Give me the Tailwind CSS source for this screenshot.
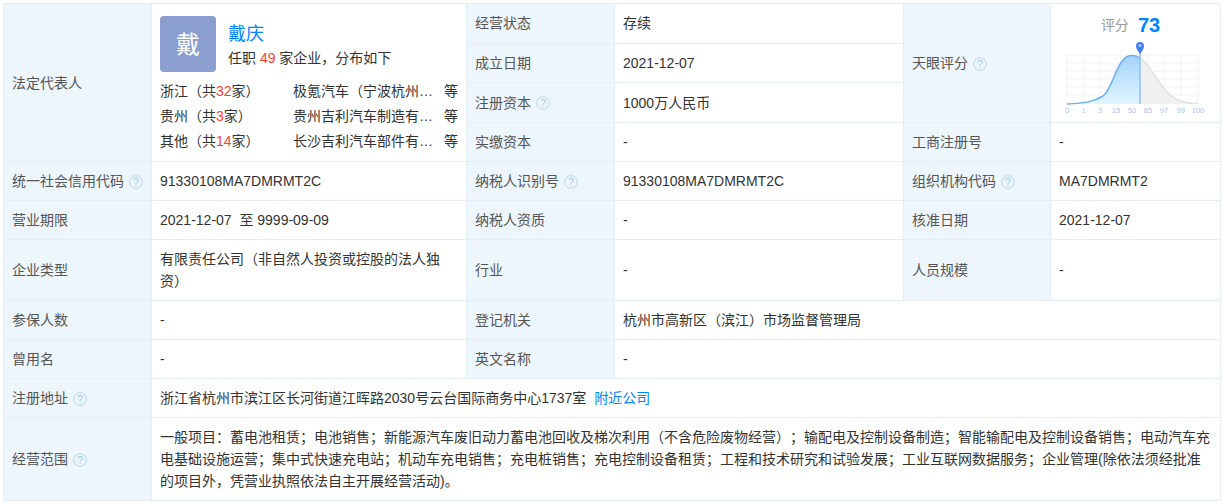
<!DOCTYPE html>
<html lang="zh">
<head>
    <meta charset="UTF-8">
    <title>工商信息</title>
    <script src="https://cdn.jsdelivr.net/npm/@tailwindcss/browser@4"></script>
</head>
<body class="bg-white font-['Liberation_Sans','Noto_Sans_CJK_SC',sans-serif] text-[14px] leading-[19px] text-[#333] [text-spacing-trim:space-all]">
<div class="pl-[3px] pr-[2px] pt-[3px]">
    <table class="w-[1218px] table-fixed border-collapse border border-[#e4eef6]">
        <colgroup>
            <col class="w-[148px]"><col class="w-[315px]"><col class="w-[148px]"><col class="w-[289px]"><col class="w-[147px]"><col>
        </colgroup>
        <tbody>
            <tr class="h-[39.5px]">
                <td rowspan="4" class="border border-[#e4eef6] bg-[#eef6fd] px-2 pt-[2px] text-[#555]">法定代表人</td>
                <td rowspan="4" class="border border-[#e4eef6] px-2 py-0 align-top">
                    <div class="flex items-start pt-[12px]">
                        <div class="flex h-14 w-14 items-center justify-center rounded-[4px] bg-[#8a9fcf] text-[24px] text-white">戴</div>
                        <div class="ml-3">
                            <div class="mt-[6px] text-[18px] leading-[24px] text-[#0084ff]">戴庆</div>
                            <div class="mt-[2px] leading-[20px]">任职 <span class="text-[#ff3b30]">49</span> 家企业，分布如下</div>
                        </div>
                    </div>
                    <div class="mt-[7px] flex h-[25px] items-center"><span class="w-[133px] shrink-0">浙江（共<span class="text-[#ff3b30]">32</span>家）</span><span class="w-[141px]">极氪汽车（宁波杭州…</span><span class="ml-auto">等</span></div>
                    <div class="flex h-[25px] items-center"><span class="w-[133px] shrink-0">贵州（共<span class="text-[#ff3b30]">3</span>家）</span><span class="w-[141px]">贵州吉利汽车制造有…</span><span class="ml-auto">等</span></div>
                    <div class="flex h-[25px] items-center"><span class="w-[133px] shrink-0">其他（共<span class="text-[#ff3b30]">14</span>家）</span><span class="w-[141px]">长沙吉利汽车部件有…</span><span class="ml-auto">等</span></div>
                </td>
                <td class="border border-[#e4eef6] bg-[#eef6fd] px-2 text-[#555]">经营状态</td>
                <td class="border border-[#e4eef6] px-2">存续</td>
                <td rowspan="3" class="border border-[#e4eef6] bg-[#eef6fd] px-2 pt-[2px] text-[#555]">
                    <span class="inline-flex items-center gap-[5px]">天眼评分
                        <svg class="h-[14px] w-[14px]" viewBox="0 0 14 14"><circle cx="7" cy="7" r="6.3" fill="none" stroke="#b5d8f5"/><text x="7" y="10.5" text-anchor="middle" font-size="10" fill="#9ccbf0">?</text></svg>
                    </span>
                </td>
                <td rowspan="3" class="border border-[#e4eef6] p-0 align-top">
                    <div class="mt-[9px] flex items-center justify-center gap-[9px] pr-[10px]">
                        <span class="text-[#999]">评分</span><span class="text-[20px] leading-[24px] font-bold text-[#0084ff]">73</span>
                    </div>
                    <svg class="mt-[3px] ml-[14px] block" width="146" height="80" viewBox="0 0 146 80">
                        <defs>
                            <linearGradient id="blue" x1="0" y1="0" x2="0" y2="1"><stop offset="0" stop-color="#a4d2fb"/><stop offset="1" stop-color="#dff6ff"/></linearGradient>
                        </defs>
                        <g stroke="#f4f4f4" stroke-width="1">
                            <path d="M2 15H133M2 23H133M2 31H133M2 39H133M2 47H133M2 55H133"/>
                            <path d="M2 15V64M18.500 15V64M35 15V64M51 15V64M67 15V64M83 15V64M99 15V64M116 15V64M133 15V64"/>
                        </g>
                        <path d="M75 18 C85 23 93 45 105 55 C114 62 122 63 133 63.500 L133 64 H75Z" fill="#f0f0f0"/>
                        <path d="M75 18 C85 23 93 45 105 55 C114 62 122 63 133 63.500" fill="none" stroke="#e2e2e2" stroke-width="1.500"/>
                        <path d="M2 64 C20 63 28 62 38 56 C48 49 52 16 66 15.500 C70 15 73 16.500 75 18 V64 H2Z" fill="url(#blue)"/>
                        <path d="M2 64 C20 63 28 62 38 56 C48 49 52 16 66 15.500 C70 15 73 16.500 75 18" fill="none" stroke="#68aefc" stroke-width="1.500"/>
                        <path d="M75 12V64" stroke="#8dbcfb" stroke-width="1.500"/>
                        <path d="M75 14 C72 10 71 8 71 6 A4 4 0 0 1 79 6 C79 8 78 10 75 14Z" fill="#3f7ff5"/>
                        <circle cx="75" cy="5.500" r="1.500" fill="#a9c8fb"/>
                        <g font-size="7.500" fill="#a9c4ee" text-anchor="middle">
                            <text x="2" y="73">0</text><text x="18.500" y="73">1</text><text x="35" y="73">3</text><text x="51" y="73">15</text><text x="67" y="73">50</text><text x="83" y="73">85</text><text x="99" y="73">97</text><text x="116" y="73">99</text><text x="133" y="73">100</text>
                        </g>
                    </svg>
                </td>
            </tr>
            <tr class="h-[39px]">
                <td class="border border-[#e4eef6] bg-[#eef6fd] px-2 pt-[2px] text-[#555]">成立日期</td>
                <td class="border border-[#e4eef6] px-2 pt-[2px]">2021-12-07</td>
            </tr>
            <tr class="h-[40px]">
                <td class="border border-[#e4eef6] bg-[#eef6fd] px-2 pt-[2px] text-[#555]">
                    <span class="inline-flex items-center gap-[5px]">注册资本
                        <svg class="h-[14px] w-[14px]" viewBox="0 0 14 14"><circle cx="7" cy="7" r="6.3" fill="none" stroke="#b5d8f5"/><text x="7" y="10.5" text-anchor="middle" font-size="10" fill="#9ccbf0">?</text></svg>
                    </span>
                </td>
                <td class="border border-[#e4eef6] px-2 pt-[2px]">1000万人民币</td>
            </tr>
            <tr class="h-[39px]">
                <td class="border border-[#e4eef6] bg-[#eef6fd] px-2 pt-[2px] text-[#555]">实缴资本</td>
                <td class="border border-[#e4eef6] px-2 pt-[2px]">-</td>
                <td class="border border-[#e4eef6] bg-[#eef6fd] px-2 pt-[2px] text-[#555]">工商注册号</td>
                <td class="border border-[#e4eef6] px-2 pt-[2px]">-</td>
            </tr>
            <tr class="h-[39px]">
                <td class="border border-[#e4eef6] bg-[#eef6fd] px-2 pt-[2px] text-[#555]">
                    <span class="inline-flex items-center gap-[5px]">统一社会信用代码
                        <svg class="h-[14px] w-[14px]" viewBox="0 0 14 14"><circle cx="7" cy="7" r="6.3" fill="none" stroke="#b5d8f5"/><text x="7" y="10.5" text-anchor="middle" font-size="10" fill="#9ccbf0">?</text></svg>
                    </span>
                </td>
                <td class="border border-[#e4eef6] px-2 pt-[2px]">91330108MA7DMRMT2C</td>
                <td class="border border-[#e4eef6] bg-[#eef6fd] px-2 pt-[2px] text-[#555]">
                    <span class="inline-flex items-center gap-[5px]">纳税人识别号
                        <svg class="h-[14px] w-[14px]" viewBox="0 0 14 14"><circle cx="7" cy="7" r="6.3" fill="none" stroke="#b5d8f5"/><text x="7" y="10.5" text-anchor="middle" font-size="10" fill="#9ccbf0">?</text></svg>
                    </span>
                </td>
                <td class="border border-[#e4eef6] px-2 pt-[2px]">91330108MA7DMRMT2C</td>
                <td class="border border-[#e4eef6] bg-[#eef6fd] px-2 pt-[2px] text-[#555]">
                    <span class="inline-flex items-center gap-[5px]">组织机构代码
                        <svg class="h-[14px] w-[14px]" viewBox="0 0 14 14"><circle cx="7" cy="7" r="6.3" fill="none" stroke="#b5d8f5"/><text x="7" y="10.5" text-anchor="middle" font-size="10" fill="#9ccbf0">?</text></svg>
                    </span>
                </td>
                <td class="border border-[#e4eef6] px-2 pt-[2px]">MA7DMRMT2</td>
            </tr>
            <tr class="h-[39px]">
                <td class="border border-[#e4eef6] bg-[#eef6fd] px-2 pt-[2px] text-[#555]">营业期限</td>
                <td class="border border-[#e4eef6] px-2 pt-[2px]">2021-12-07&nbsp; 至 9999-09-09</td>
                <td class="border border-[#e4eef6] bg-[#eef6fd] px-2 pt-[2px] text-[#555]">纳税人资质</td>
                <td class="border border-[#e4eef6] px-2 pt-[2px]">-</td>
                <td class="border border-[#e4eef6] bg-[#eef6fd] px-2 pt-[2px] text-[#555]">核准日期</td>
                <td class="border border-[#e4eef6] px-2 pt-[2px]">2021-12-07</td>
            </tr>
            <tr class="h-[61px]">
                <td class="border border-[#e4eef6] bg-[#eef6fd] px-2 pt-[2px] text-[#555]">企业类型</td>
                <td class="border border-[#e4eef6] px-2 leading-[22px]">有限责任公司（非自然人投资或控股的法人独资）</td>
                <td class="border border-[#e4eef6] bg-[#eef6fd] px-2 pt-[2px] text-[#555]">行业</td>
                <td class="border border-[#e4eef6] px-2 pt-[2px]">-</td>
                <td class="border border-[#e4eef6] bg-[#eef6fd] px-2 pt-[2px] text-[#555]">人员规模</td>
                <td class="border border-[#e4eef6] px-2 pt-[2px]">-</td>
            </tr>
            <tr class="h-[39px]">
                <td class="border border-[#e4eef6] bg-[#eef6fd] px-2 pt-[2px] text-[#555]">参保人数</td>
                <td class="border border-[#e4eef6] px-2 pt-[2px]">-</td>
                <td class="border border-[#e4eef6] bg-[#eef6fd] px-2 pt-[2px] text-[#555]">登记机关</td>
                <td colspan="3" class="border border-[#e4eef6] px-2 pt-[2px]">杭州市高新区（滨江）市场监督管理局</td>
            </tr>
            <tr class="h-[39px]">
                <td class="border border-[#e4eef6] bg-[#eef6fd] px-2 pt-[2px] text-[#555]">曾用名</td>
                <td class="border border-[#e4eef6] px-2 pt-[2px]">-</td>
                <td class="border border-[#e4eef6] bg-[#eef6fd] px-2 pt-[2px] text-[#555]">英文名称</td>
                <td colspan="3" class="border border-[#e4eef6] px-2 pt-[2px]">-</td>
            </tr>
            <tr class="h-[39px]">
                <td class="border border-[#e4eef6] bg-[#eef6fd] px-2 pt-[2px] text-[#555]">
                    <span class="inline-flex items-center gap-[5px]">注册地址
                        <svg class="h-[14px] w-[14px]" viewBox="0 0 14 14"><circle cx="7" cy="7" r="6.3" fill="none" stroke="#b5d8f5"/><text x="7" y="10.5" text-anchor="middle" font-size="10" fill="#9ccbf0">?</text></svg>
                    </span>
                </td>
                <td colspan="5" class="border border-[#e4eef6] px-2 pt-[2px]">浙江省杭州市滨江区长河街道江晖路2030号云台国际商务中心1737室<span class="ml-[8px] text-[#0084ff]">附近公司</span></td>
            </tr>
            <tr class="h-[83px]">
                <td class="border border-[#e4eef6] bg-[#eef6fd] px-2 pt-[2px] text-[#555]">
                    <span class="inline-flex items-center gap-[5px]">经营范围
                        <svg class="h-[14px] w-[14px]" viewBox="0 0 14 14"><circle cx="7" cy="7" r="6.3" fill="none" stroke="#b5d8f5"/><text x="7" y="10.5" text-anchor="middle" font-size="10" fill="#9ccbf0">?</text></svg>
                    </span>
                </td>
                <td colspan="5" class="border border-[#e4eef6] px-2 leading-[22px]">一般项目：蓄电池租赁；电池销售；新能源汽车废旧动力蓄电池回收及梯次利用（不含危险废物经营）；输配电及控制设备制造；智能输配电及控制设备销售；电动汽车充电基础设施运营；集中式快速充电站；机动车充电销售；充电桩销售；充电控制设备租赁；工程和技术研究和试验发展；工业互联网数据服务；企业管理(除依法须经批准的项目外，凭营业执照依法自主开展经营活动)。</td>
            </tr>
        </tbody>
    </table>
</div>
</body>
</html>
